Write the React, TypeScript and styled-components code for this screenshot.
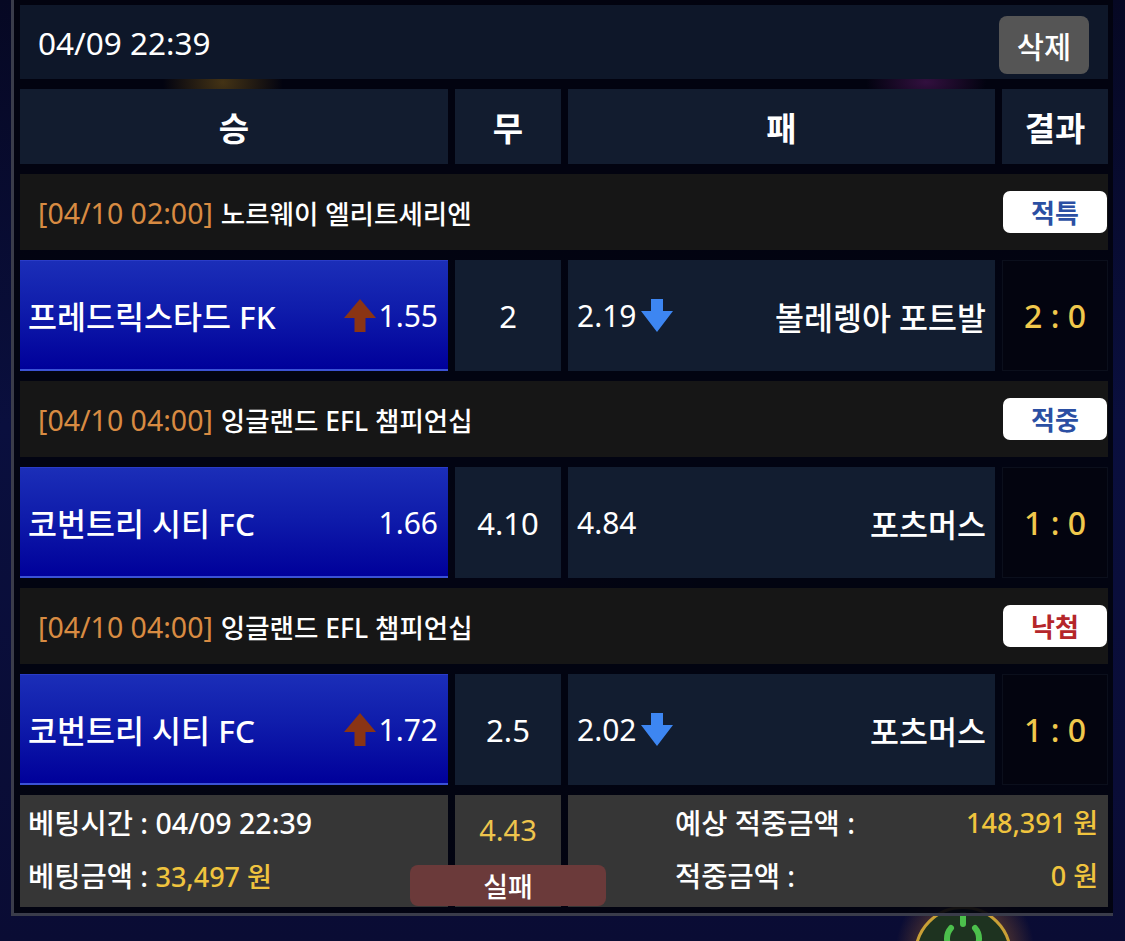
import React from 'react';
import styled, { createGlobalStyle } from 'styled-components';

const GlobalStyle = createGlobalStyle`
  html, body {
    margin: 0;
    padding: 0;
    background: #080b2e;
  }
  * {
    box-sizing: border-box;
  }
`;

const COLS = '428px 106px 427px 106px';

const Page = styled.div`
  position: relative;
  width: 1125px;
  height: 941px;
  overflow: hidden;
  font-family: 'Noto Sans', 'Noto Sans CJK KR', sans-serif;
  color: #fff;
  background:
    radial-gradient(ellipse 260px 120px at 40% 60%, rgba(30, 40, 140, 0.35), transparent),
    linear-gradient(180deg, #060823 0%, #0a0f3e 45%, #0a0c34 100%);
`;

const Glow = styled.div`
  position: absolute;
  left: 895px;
  top: 880px;
  width: 140px;
  height: 140px;
  border-radius: 50%;
  background: radial-gradient(circle, rgba(200, 120, 40, 0.45) 30%, transparent 70%);
`;

const FloatButton = styled.div`
  position: absolute;
  left: 914px;
  top: 906px;
  width: 98px;
  height: 98px;
  border-radius: 50%;
  border: 3px solid #c9a036;
  background: #1e3320;
  display: flex;
  justify-content: center;
  padding-top: 3px;
`;

const Panel = styled.div`
  position: relative;
  z-index: 1;
  margin-left: 11px;
  width: 1102px;
  padding: 5px 5px 6px 6px;
  border-left: 3px solid #3a3c4a;
  border-bottom: 3px solid #3a3c4a;
  background:
    radial-gradient(ellipse 60px 50px at 19% 9%, rgba(190, 140, 30, 0.35), transparent),
    radial-gradient(ellipse 60px 30px at 83% 9%, rgba(140, 40, 150, 0.35), transparent),
    rgba(2, 3, 14, 0.92);
  display: flex;
  flex-direction: column;
  gap: 10px;
`;

const TopBar = styled.div`
  height: 74px;
  background: #0e1729;
  display: flex;
  align-items: center;
  justify-content: space-between;
  padding: 0 19px 0 18px;
  font-size: 31.5px;
`;

const DeleteButton = styled.button`
  width: 90px;
  height: 58px;
  margin-top: 6px;
  border: none;
  border-radius: 8px;
  background: #555555;
  color: #fff;
  font-family: inherit;
  font-size: 29.5px;
  font-weight: 500;
  cursor: pointer;
`;

const Grid = styled.div`
  display: grid;
  grid-template-columns: ${COLS};
  gap: 7px;
`;

const HeadCell = styled.div`
  height: 75px;
  background: #121c2f;
  display: flex;
  align-items: center;
  justify-content: center;
  font-size: 33px;
  font-weight: 700;
`;

const LeagueRow = styled.div`
  height: 76px;
  background: #161616;
  display: flex;
  align-items: center;
  justify-content: space-between;
  padding: 0 1px 0 18px;
  font-size: 26.5px;
  font-weight: 500;
`;

const Time = styled.span`
  color: #d88b42;
  font-size: 28.5px;
  font-weight: 400;
  margin-right: 8px;
`;

const Badge = styled.div<{ $tone: string }>`
  width: 104px;
  height: 42px;
  border-radius: 7px;
  background: #fff;
  color: ${(p) => p.$tone};
  font-size: 26px;
  font-weight: 700;
  display: flex;
  align-items: center;
  justify-content: center;
`;

const MatchGrid = styled(Grid)`
  height: 111px;
`;

const HomeCell = styled.div`
  display: flex;
  align-items: center;
  padding: 0 10px 0 8px;
  background: linear-gradient(180deg, #1b2eb8 0%, #0f1cab 45%, #00009a 100%);
  border-top: 1px solid #2a3cc8;
  border-bottom: 2px solid #3b52d6;
  font-size: 31.5px;
  font-weight: 500;
`;

const AwayCell = styled.div`
  display: flex;
  align-items: center;
  padding: 0 9px;
  background: #121d30;
  font-size: 31.5px;
  font-weight: 500;
`;

const DrawCell = styled.div`
  display: flex;
  align-items: center;
  justify-content: center;
  background: #121d30;
  font-size: 31px;
`;

const ResultCell = styled.div`
  display: flex;
  align-items: center;
  justify-content: center;
  background: #03040f;
  border: 1px solid #0b0f1c;
  color: #f0c84c;
  font-size: 32px;
  font-weight: 500;
`;

const TeamName = styled.span`
  flex: 1;
  white-space: nowrap;
`;

const AwayName = styled(TeamName)`
  text-align: right;
`;

const Odds = styled.span<{ $gap: number }>`
  display: flex;
  align-items: center;
  gap: ${(p) => p.$gap}px;
  font-size: 30px;
  font-weight: 400;
`;

const SummaryGrid = styled(Grid)`
  position: relative;
  height: 112px;
`;

const SummaryCell = styled.div`
  background: #363636;
  display: flex;
  flex-direction: column;
  gap: 17px;
  padding: 10px 8px;
  font-size: 28.5px;
  font-weight: 500;
`;

const Line = styled.div`
  height: 36px;
  line-height: 36px;
  white-space: nowrap;
`;

const Gold = styled.span`
  color: #f0c43e;
  font-size: 27px;
`;

const RateCell = styled.div`
  background: #363636;
  text-align: center;
  padding-top: 17px;
  line-height: 36px;
  font-size: 29px;
  color: #eec54d;
`;

const PayoutCell = styled(SummaryCell)`
  grid-column: span 2;
  padding: 10px 10px 10px 107px;
`;

const PayoutLine = styled(Line)`
  display: flex;
  justify-content: space-between;
`;

const FailButton = styled.div`
  position: absolute;
  left: 390px;
  top: 70px;
  width: 196px;
  height: 41px;
  border-radius: 8px;
  background: #6b3a3a;
  display: flex;
  align-items: center;
  justify-content: center;
  font-size: 27px;
  font-weight: 500;
`;

const UpArrow = () => (
  <svg width="32" height="33" viewBox="0 0 32 33">
    <polygon points="16,0 32,19 21.5,19 21.5,33 10.5,33 10.5,19 0,19" fill="#8a3414" />
  </svg>
);

const DownArrow = () => (
  <svg width="32" height="33" viewBox="0 0 32 33">
    <polygon points="10,0 22,0 22,12 32,12 16,33 0,12 10,12" fill="#3d86f2" />
  </svg>
);

interface Match {
  time: string;
  league: string;
  badge: string;
  tone: string;
  home: string;
  homeOdds: string;
  homeUp?: boolean;
  draw: string;
  awayOdds: string;
  awayDown?: boolean;
  away: string;
  score: string;
}

const matches: Match[] = [
  {
    time: '[04/10 02:00]',
    league: '노르웨이 엘리트세리엔',
    badge: '적특',
    tone: '#2b4fa3',
    home: '프레드릭스타드 FK',
    homeOdds: '1.55',
    homeUp: true,
    draw: '2',
    awayOdds: '2.19',
    awayDown: true,
    away: '볼레렝아 포트발',
    score: '2 : 0',
  },
  {
    time: '[04/10 04:00]',
    league: '잉글랜드 EFL 챔피언십',
    badge: '적중',
    tone: '#2b4fa3',
    home: '코번트리 시티 FC',
    homeOdds: '1.66',
    draw: '4.10',
    awayOdds: '4.84',
    away: '포츠머스',
    score: '1 : 0',
  },
  {
    time: '[04/10 04:00]',
    league: '잉글랜드 EFL 챔피언십',
    badge: '낙첨',
    tone: '#b5262a',
    home: '코번트리 시티 FC',
    homeOdds: '1.72',
    homeUp: true,
    draw: '2.5',
    awayOdds: '2.02',
    awayDown: true,
    away: '포츠머스',
    score: '1 : 0',
  },
];

const BetSlip: React.FC = () => {
  return (
    <Page>
      <GlobalStyle />
      <Glow />
      <FloatButton>
        <svg width="60" height="40" viewBox="0 0 60 40">
          <path d="M30 2 v10 M18 16 a16 16 0 1 0 24 0" stroke="#4cc04c" strokeWidth="6" fill="none" strokeLinecap="round" />
        </svg>
      </FloatButton>
      <Panel>
        <TopBar>
          <span>04/09 22:39</span>
          <DeleteButton>삭제</DeleteButton>
        </TopBar>
        <Grid>
          <HeadCell>승</HeadCell>
          <HeadCell>무</HeadCell>
          <HeadCell>패</HeadCell>
          <HeadCell>결과</HeadCell>
        </Grid>
        {matches.map((m, i) => (
          <React.Fragment key={i}>
            <LeagueRow>
              <span>
                <Time>{m.time}</Time>
                {m.league}
              </span>
              <Badge $tone={m.tone}>{m.badge}</Badge>
            </LeagueRow>
            <MatchGrid>
              <HomeCell>
                <TeamName>{m.home}</TeamName>
                <Odds $gap={2}>
                  {m.homeUp && <UpArrow />}
                  {m.homeOdds}
                </Odds>
              </HomeCell>
              <DrawCell>{m.draw}</DrawCell>
              <AwayCell>
                <Odds $gap={4}>
                  {m.awayOdds}
                  {m.awayDown && <DownArrow />}
                </Odds>
                <AwayName>{m.away}</AwayName>
              </AwayCell>
              <ResultCell>{m.score}</ResultCell>
            </MatchGrid>
          </React.Fragment>
        ))}
        <SummaryGrid>
          <SummaryCell>
            <Line>베팅시간 : 04/09 22:39</Line>
            <Line>
              베팅금액 : <Gold>33,497 원</Gold>
            </Line>
          </SummaryCell>
          <RateCell>4.43</RateCell>
          <PayoutCell>
            <PayoutLine>
              <span>예상 적중금액 :</span>
              <Gold>148,391 원</Gold>
            </PayoutLine>
            <PayoutLine>
              <span>적중금액 :</span>
              <Gold>0 원</Gold>
            </PayoutLine>
          </PayoutCell>
          <FailButton>실패</FailButton>
        </SummaryGrid>
      </Panel>
    </Page>
  );
};

export default BetSlip;
